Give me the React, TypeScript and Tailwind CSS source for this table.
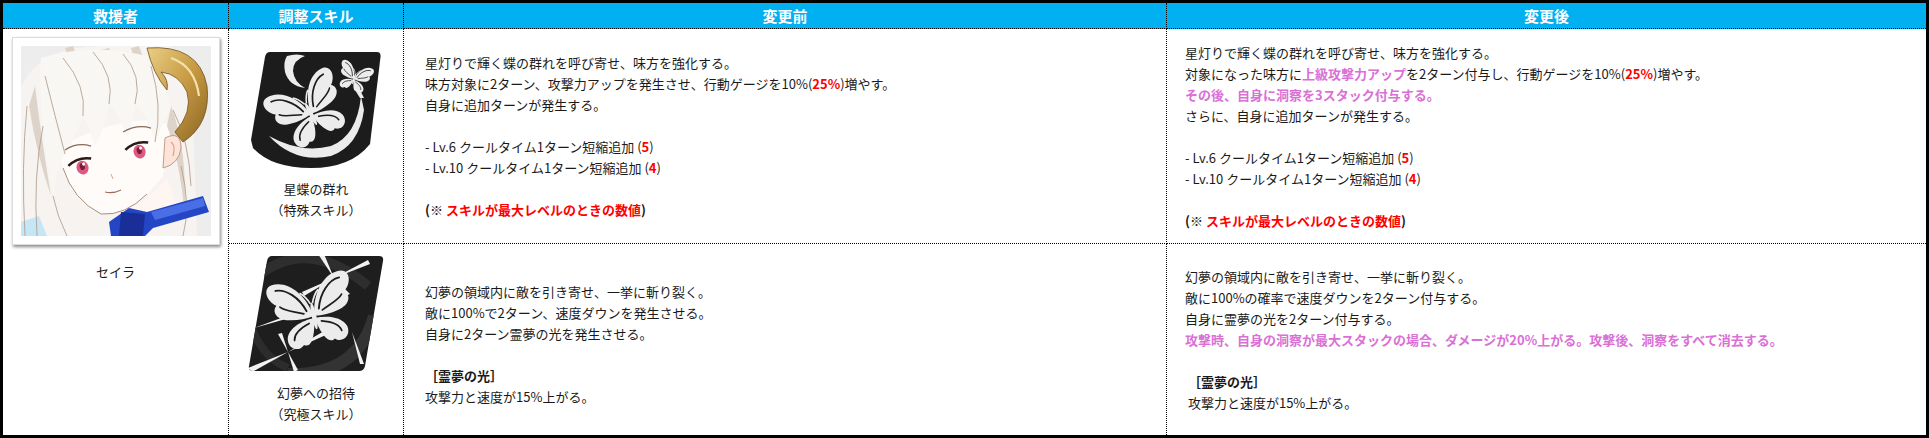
import React from "react";

const FONT = { fontFamily: '"Noto Sans CJK JP", "Noto Sans", sans-serif' };

function Wing() {
  return (
    <g>
      <path d="M1,-3 C4,-22 18,-39 34,-37 C43,-35 41,-23 33,-17 C39,-12 35,-3 24,-1 C16,1 8,1 1,0 Z" fill="#ececec" />
      <path d="M6,-6 C10,-20 21,-31 31,-31" fill="none" stroke="#1c1c1c" strokeWidth="1.8" strokeLinecap="round" />
      <path d="M9,-4 C17,-8 26,-10 30,-15" fill="none" stroke="#1c1c1c" strokeWidth="1.6" strokeLinecap="round" />
      <path d="M1,2 C12,2 26,6 29,16 C31,26 21,31 15,25 C10,29 4,22 1,6 Z" fill="#ececec" />
      <path d="M6,6 C13,8 22,12 23,19" fill="none" stroke="#1c1c1c" strokeWidth="1.6" strokeLinecap="round" />
    </g>
  );
}

function Butterfly({ t }: { t: string }) {
  return (
    <g transform={t}>
      <Wing />
      <g transform="scale(-1,1)">
        <Wing />
      </g>
      <ellipse cx="0" cy="0" rx="2.2" ry="13" fill="#ececec" />
      <path d="M-1,-12 Q-4,-20 -9,-24" stroke="#ececec" strokeWidth="1.6" fill="none" />
      <path d="M1,-12 Q4,-20 9,-24" stroke="#ececec" strokeWidth="1.6" fill="none" />
    </g>
  );
}

function SkillIcon1() {
  return (
    <svg width="130" height="116" viewBox="0 0 130 116">
      <path d="M19,0 H126 Q130,0 129.5,5 L119,92 Q100,116 60,116 Q20,116 2,96 L0,88 L14,5 Q15,0 19,0 Z" fill="#1c1c1c" />
      <path d="M36,4 Q46,1 54,4 Q42,8 42,19 Q43,30 54,36 Q38,34 34,20 Q32,10 36,4 Z" fill="#ececec" />
      <Butterfly t="translate(60,62) rotate(-28) scale(0.95)" />
      <Butterfly t="translate(103,27) rotate(18) scale(0.42)" />
      <path d="M18,84 Q44,112 80,104 Q108,94 113,58 L110,44 Q106,84 80,94 Q50,102 18,84 Z" fill="#ececec" />
      <path d="M109,46 L104,38 L108,36 L113,46 Z" fill="#ececec" />
    </svg>
  );
}

function SkillIcon2() {
  const shape = "M24,0 H131 Q136,0 135,5 L117,110 Q116,115 111,115 H5 Q0,115 1,110 L19,5 Q20,0 24,0 Z";
  return (
    <svg width="136" height="116" viewBox="0 0 136 116">
      <defs>
        <clipPath id="pg">
          <path d={shape} />
        </clipPath>
      </defs>
      <path d={shape} fill="#1e1e1e" />
      <g clipPath="url(#pg)">
        <path d="M10,20 Q60,-20 120,30" fill="none" stroke="#2e2e2e" strokeWidth="10" />
        <path d="M126,60 Q110,120 40,118" fill="none" stroke="#333" strokeWidth="12" />
        <path d="M0,60 Q10,100 40,112" fill="none" stroke="#2c2c2c" strokeWidth="8" />
        <polygon points="86,22 70,-2 76,-2" fill="#f2f2f2" />
        <polygon points="86,22 102,38 97,40" fill="#f2f2f2" />
        <polygon points="86,22 120,4 122,8" fill="#f2f2f2" />
        <polygon points="86,22 56,40 54,36" fill="#f2f2f2" />
        <polygon points="40,96 4,116 0,112" fill="#f2f2f2" />
        <polygon points="40,96 78,74 80,78" fill="#f2f2f2" />
        <polygon points="40,96 30,78 34,77" fill="#f2f2f2" />
        <polygon points="40,96 50,114 46,116" fill="#f2f2f2" />
        <polygon points="6,72 52,55 52,59" fill="#f2f2f2" />
        <polygon points="104,76 116,108 112,108" fill="#f2f2f2" />
      </g>
      <Butterfly t="translate(66,60) rotate(-12) scale(1.05)" />
    </svg>
  );
}

function Portrait() {
  return (
    <svg width="190" height="190" viewBox="0 0 190 190">
      <defs>
        <linearGradient id="gold" x1="0" y1="0" x2="1" y2="1">
          <stop offset="0" stopColor="#e9cf85" />
          <stop offset="0.5" stopColor="#c79a43" />
          <stop offset="1" stopColor="#8a6424" />
        </linearGradient>
      </defs>
      <rect width="190" height="190" fill="#ededed" />
      <path d="M0,40 Q20,0 80,0 L150,0 Q168,24 172,70 L176,190 L0,190 Z" fill="#f6f3f0" />
      <path d="M0,176 L18,170 L26,190 L0,190 Z" fill="#c4e6f6" />
      <path d="M38,100 Q42,150 80,168 Q112,170 142,130 L150,80 Q118,62 38,100 Z" fill="#fffbf8" />
      <path d="M42,122 Q52,154 80,168 Q104,170 126,148" fill="none" stroke="#a98e7c" strokeWidth="1" />
      <path d="M100,166 Q126,156 146,132 L156,160 L124,176 Z" fill="#fff6f1" />
      <g fill="#ddd3c9">
        <path d="M52,0 Q64,30 62,72 Q58,40 44,2 Z" />
        <path d="M88,2 Q100,30 98,66 Q92,36 80,4 Z" />
        <path d="M118,0 Q130,30 128,80 Q122,40 110,2 Z" />
        <path d="M14,40 Q20,90 30,150 Q16,110 8,60 Z" />
        <path d="M150,60 Q166,100 164,170 Q158,110 146,80 Z" />
      </g>
      <path d="M144,92 Q160,84 160,102 Q158,118 142,122 Z" fill="#fde3d8" stroke="#b08876" strokeWidth="0.8" />
      <path d="M150,96 Q155,100 152,110" fill="none" stroke="#e39a94" strokeWidth="1.2" />
      <path d="M20,12 Q70,-4 126,10 Q142,30 150,62 Q140,80 134,96 Q128,72 114,58 Q112,80 106,92 Q100,70 88,58 Q84,82 74,100 Q68,80 62,70 Q54,92 44,108 Q36,122 32,150 Q24,110 22,80 Q18,44 20,12 Z" fill="#f9f7f4" />
      <g fill="none" stroke="#b4a290" strokeWidth="0.9">
        <path d="M114,58 Q122,30 102,8" />
        <path d="M88,58 Q94,30 72,6" />
        <path d="M62,70 Q66,40 42,12" />
        <path d="M134,96 Q142,60 130,20" />
        <path d="M44,108 Q34,70 24,30" />
        <path d="M22,80 Q12,130 16,190" />
        <path d="M32,150 Q36,170 46,190" />
        <path d="M6,60 Q0,120 4,190" />
        <path d="M160,120 Q170,160 162,190" />
        <path d="M152,64 Q168,94 170,140" />
      </g>
      <path d="M126,2 Q178,-2 186,40 Q190,78 162,96 L154,86 Q172,66 166,46 Q158,28 140,26 Q148,34 146,44 Q132,28 126,2 Z" fill="url(#gold)" stroke="#6e4e1c" strokeWidth="0.8" />
      <path d="M150,12 Q174,20 178,50" fill="none" stroke="#f5e2a8" strokeWidth="2.2" />
      <path d="M44,104 Q56,96 70,100" fill="none" stroke="#8a6a5a" strokeWidth="1.3" />
      <path d="M102,86 Q116,78 130,82" fill="none" stroke="#8a6a5a" strokeWidth="1.3" />
      <g transform="translate(60,120) rotate(-18)">
        <ellipse cx="0" cy="2" rx="10" ry="7.5" fill="#fff" />
        <ellipse cx="1" cy="2" rx="6" ry="7" fill="#de5b80" />
        <ellipse cx="1" cy="1" rx="2.5" ry="3.5" fill="#7a1d3a" />
        <circle cx="3" cy="-1" r="1.5" fill="#fff" />
        <path d="M-12,-4 Q0,-10 12,-4" fill="none" stroke="#2a1a1a" strokeWidth="2.5" />
      </g>
      <g transform="translate(117,104) rotate(-18)">
        <ellipse cx="0" cy="2" rx="10" ry="7.5" fill="#fff" />
        <ellipse cx="1" cy="2" rx="6" ry="7" fill="#de5b80" />
        <ellipse cx="1" cy="1" rx="2.5" ry="3.5" fill="#7a1d3a" />
        <circle cx="3" cy="-1" r="1.5" fill="#fff" />
        <path d="M-12,-4 Q0,-10 12,-4" fill="none" stroke="#2a1a1a" strokeWidth="2.5" />
      </g>
      <path d="M90,128 L92,133" stroke="#d9a994" strokeWidth="1" />
      <path d="M84,146 Q92,148 100,144" fill="none" stroke="#a06a60" strokeWidth="1.1" />
      {/* blue ribbon */}
      <path d="M88,176 L108,162 L126,166 L182,150 L188,166 L132,182 L124,190 L90,190 Z" fill="#2446c4" />
      <path d="M100,166 L124,168 L122,190 L98,190 Z" fill="#1a2e98" />
      <path d="M130,166 L182,152 L184,160 L134,174 Z" fill="#4a6ee6" />
    </svg>
  );
}

const R = ({ children }: { children: React.ReactNode }) => (
  <span className="font-bold text-[#ff0000]">{children}</span>
);
const P = ({ children }: { children: React.ReactNode }) => (
  <span className="font-bold text-[#da70d6]">{children}</span>
);
const Blank = () => <div className="h-[21px]" />;

export default function App() {
  const cellBorder = "border-r border-dotted border-black";
  return (
    <div style={FONT} className="w-[1929px] h-[438px] bg-white">
      <div className="w-[1929px] h-[438px] border-[3px] border-black grid grid-cols-[226px_175px_763px_759px] grid-rows-[26px_215px_191px] text-[13px] leading-[21px] text-[#1a1a1a]">
        <div className={`bg-[#00b0f0] ${cellBorder} border-b flex items-center justify-center text-white font-bold text-[15px]`}>救援者</div>
        <div className={`bg-[#00b0f0] ${cellBorder} border-b flex items-center justify-center text-white font-bold text-[15px]`}>調整スキル</div>
        <div className={`bg-[#00b0f0] ${cellBorder} border-b flex items-center justify-center text-white font-bold text-[15px]`}>変更前</div>
        <div className="bg-[#00b0f0] border-b border-dotted border-black flex items-center justify-center text-white font-bold text-[15px]">変更後</div>

        <div className={`row-span-2 ${cellBorder} flex flex-col items-center pt-[8px]`}>
          <div className="w-[208px] h-[208px] bg-white border border-[#dcdcdc] shadow-[1px_2px_3px_rgba(0,0,0,0.45)] flex items-center justify-center">
            <Portrait />
          </div>
          <div className="mt-[16px]">セイラ</div>
        </div>

        <div className={`${cellBorder} border-b flex flex-col items-center justify-center`}>
          <SkillIcon1 />
          <div className="mt-[10px] text-center">
            <div>星蝶の群れ</div>
            <div>（特殊スキル）</div>
          </div>
        </div>
        <div className={`${cellBorder} border-b flex items-center pl-[21px]`}>
          <div>
            <div>星灯りで輝く蝶の群れを呼び寄せ、味方を強化する。</div>
            <div>味方対象に2ターン、攻撃力アップを発生させ、行動ゲージを10%(<R>25%</R>)増やす。</div>
            <div>自身に追加ターンが発生する。</div>
            <Blank />
            <div>- Lv.6 クールタイム1ターン短縮追加 (<R>5</R>)</div>
            <div>- Lv.10 クールタイム1ターン短縮追加 (<R>4</R>)</div>
            <Blank />
            <div className="font-bold">(※ <R>スキルが最大レベルのときの数値</R>)</div>
          </div>
        </div>
        <div className="border-b border-dotted border-black flex items-center pl-[18px]">
          <div>
            <div>星灯りで輝く蝶の群れを呼び寄せ、味方を強化する。</div>
            <div>対象になった味方に<P>上級攻撃力アップ</P>を2ターン付与し、行動ゲージを10%(<R>25%</R>)増やす。</div>
            <div><P>その後、自身に洞察を3スタック付与する。</P></div>
            <div>さらに、自身に追加ターンが発生する。</div>
            <Blank />
            <div>- Lv.6 クールタイム1ターン短縮追加 (<R>5</R>)</div>
            <div>- Lv.10 クールタイム1ターン短縮追加 (<R>4</R>)</div>
            <Blank />
            <div className="font-bold">(※ <R>スキルが最大レベルのときの数値</R>)</div>
          </div>
        </div>

        <div className={`${cellBorder} flex flex-col items-center justify-center`}>
          <SkillIcon2 />
          <div className="mt-[10px] text-center">
            <div>幻夢への招待</div>
            <div>（究極スキル）</div>
          </div>
        </div>
        <div className={`${cellBorder} flex items-center pl-[21px] pt-[8px]`}>
          <div>
            <div>幻夢の領域内に敵を引き寄せ、一挙に斬り裂く。</div>
            <div>敵に100%で2ターン、速度ダウンを発生させる。</div>
            <div>自身に2ターン霊夢の光を発生させる。</div>
            <Blank />
            <div className="font-bold">［霊夢の光］</div>
            <div>攻撃力と速度が15%上がる。</div>
          </div>
        </div>
        <div className="flex items-center pl-[18px]">
          <div>
            <div>幻夢の領域内に敵を引き寄せ、一挙に斬り裂く。</div>
            <div>敵に100%の確率で速度ダウンを2ターン付与する。</div>
            <div>自身に霊夢の光を2ターン付与する。</div>
            <div><P>攻撃時、自身の洞察が最大スタックの場合、ダメージが20%上がる。攻撃後、洞察をすべて消去する。</P></div>
            <Blank />
            <div className="font-bold whitespace-pre"> ［霊夢の光］</div>
            <div className="whitespace-pre"> 攻撃力と速度が15%上がる。</div>
          </div>
        </div>
      </div>
    </div>
  );
}
